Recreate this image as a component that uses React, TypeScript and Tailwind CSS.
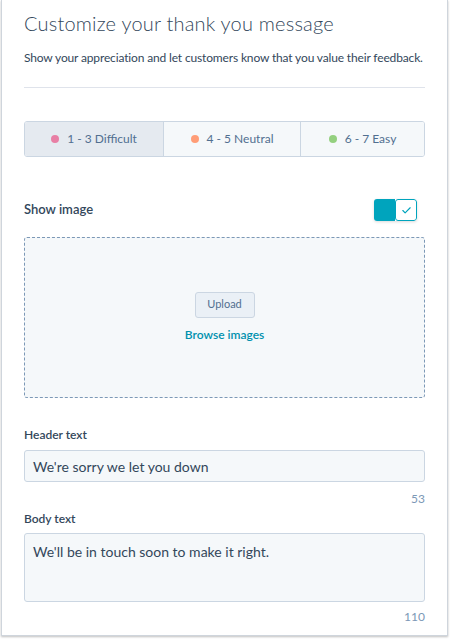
import { Check } from 'lucide-react'

const font = { fontFamily: 'Lato, "Noto Sans", sans-serif' }

function Tab({ label, dot, active, width }: { label: string; dot: string; active?: boolean; width: string }) {
    return (
        <div
            className={`flex items-center justify-center gap-[8px] text-[12px] text-[#516f90] ${width} ${
                active ? 'bg-[#e5eaf0]' : 'bg-[#f5f8fa]'
            }`}
        >
            <span className={`h-[8px] w-[8px] rounded-full ${dot}`} />
            <span>{label}</span>
        </div>
    )
}

export default function App() {
    return (
        <div className="h-[639px] w-[450px] bg-white" style={font}>
            <div className="ml-[1px] h-[636px] w-[447px] border-x border-b border-[#cfd5dc] px-[22px] text-[#33475b] shadow-[0_1px_2px_rgba(0,0,0,0.25)]">
                {/* Heading */}
                <h1 className="pt-[9px] text-[20px] font-light leading-[28px] tracking-[0.2px]">
                    Customize your thank you message
                </h1>
                <p className="mt-[12px] whitespace-nowrap text-[12px] leading-[18px] tracking-[-0.15px]">
                    Show your appreciation and let customers know that you value their feedback.
                </p>
                <div className="mt-[20px] h-px bg-[#dfe3eb]" />

                {/* Score tabs */}
                <div className="mt-[33px] flex h-[36px] overflow-hidden rounded-[3px] border border-[#cbd6e2]">
                    <Tab label="1 - 3 Difficult" dot="bg-[#e87fa5]" width="w-[138px]" active />
                    <div className="w-px bg-[#cbd6e2]" />
                    <Tab label="4 - 5 Neutral" dot="bg-[#ff9d77]" width="w-[136px]" />
                    <div className="w-px bg-[#cbd6e2]" />
                    <Tab label="6 - 7 Easy" dot="bg-[#94d07f]" width="flex-1" />
                </div>

                {/* Show image */}
                <div className="mt-[42px] flex items-center justify-between">
                    <span className="text-[13px] font-semibold">Show image</span>
                    <div className="mr-[8px] flex h-[22px] w-[43px] overflow-hidden rounded-[3px] shadow-[0_1px_3px_rgba(0,0,0,0.15)]">
                        <div className="w-[21px] bg-[#00a4bd]" />
                        <div className="flex flex-1 items-center justify-center rounded-[3px] border border-[#00a4bd] bg-white">
                            <Check className="h-[11px] w-[11px] text-[#00a4bd]" strokeWidth={2.5} />
                        </div>
                    </div>
                </div>

                {/* Image drop zone */}
                <div className="mt-[16px] flex h-[161px] flex-col items-center justify-center rounded-[3px] border border-dashed border-[#7c98b6] bg-[#f5f8fa]">
                    <button className="h-[26px] w-[60px] rounded-[3px] border border-[#cbd6e2] bg-[#eaf0f6] text-[11px] text-[#516f90]">
                        Upload
                    </button>
                    <span className="mt-[8px] text-[12px] font-semibold text-[#0091ae]">Browse images</span>
                </div>

                {/* Header text */}
                <label className="mt-[29px] block text-[12px] font-semibold leading-[16px]">Header text</label>
                <div className="mt-[7px] flex h-[32px] items-center rounded-[3px] border border-[#cbd6e2] bg-[#f5f8fa] px-[8px] text-[14px]">
                    We're sorry we let you down
                </div>
                <div className="mt-[8px] text-right text-[12px] text-[#7c98b6]">53</div>

                {/* Body text */}
                <label className="mt-[3px] block text-[12px] font-semibold leading-[16px]">Body text</label>
                <div className="mt-[6px] h-[69px] rounded-[3px] border border-[#cbd6e2] bg-[#f5f8fa] px-[8px] pt-[7px] text-[14px]">
                    We'll be in touch soon to make it right.
                </div>
                <div className="mt-[6px] text-right text-[12px] text-[#7c98b6]">110</div>
            </div>
        </div>
    )
}
